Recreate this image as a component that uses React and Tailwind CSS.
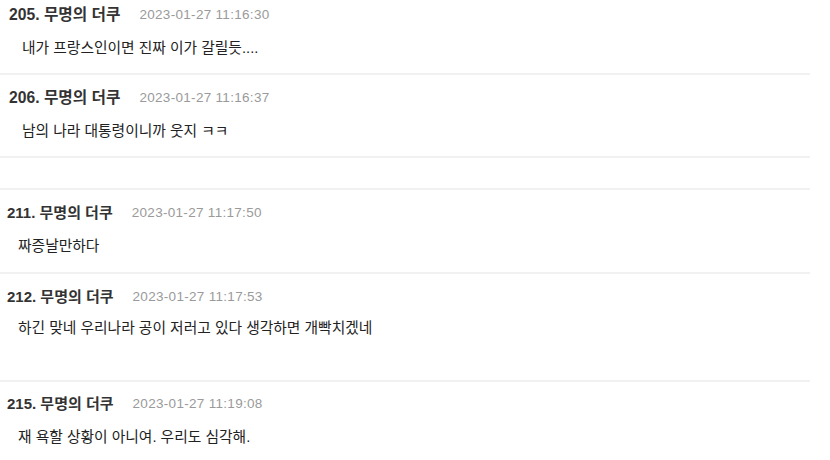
// App.jsx
import React from 'react';

const topComments = [
    { no: 205, time: '2023-01-27 11:16:30', body: '내가 프랑스인이면 진짜 이가 갈릴듯....', kind: 'first' },
    { no: 206, time: '2023-01-27 11:16:37', body: '남의 나라 대통령이니까 웃지 ㅋㅋ', kind: 'mid' },
];

const bottomComments = [
    { no: 211, time: '2023-01-27 11:17:50', body: '짜증날만하다', kind: 'mid2' },
    { no: 212, time: '2023-01-27 11:17:53', body: '하긴 맞네 우리나라 공이 저러고 있다 생각하면 개빡치겠네', kind: 'tall' },
    { no: 215, time: '2023-01-27 11:19:08', body: '재 욕할 상황이 아니여. 우리도 심각해.', kind: 'last' },
];

const wrapClass = {
    first: 'h-[75px] pt-[5px] border-b-2',
    mid: 'h-[83px] pt-[13px] border-b-2',
    mid2: 'h-[84px] pt-[13px] border-b-2',
    tall: 'h-[108px] pt-[13px] border-b-2',
    last: 'h-[78px] pt-[12px]',
};

const Comment = ({ c, compact }) => {
    return (
        <div className={`w-[810px] border-[#f1f1f1] ${wrapClass[c.kind]}`}>
            <div className={`flex items-center h-5 ${compact ? 'pl-[7px]' : 'pl-[9px]'}`}>
                <span className={`${compact ? 'text-[15px]' : 'text-[15.7px]'} font-bold text-[#333333] leading-5`}>
                    {c.no}. 무명의 더쿠
                </span>
                <span className="ml-[19px] text-[13.5px] tracking-[0.3px] text-[#9a9a9a] leading-5">
                    {c.time}
                </span>
            </div>
            <p className={`${c.kind === 'tall' ? 'mt-[11px]' : 'mt-[13px]'} text-[14.75px] leading-5 text-[#222222] ${compact ? 'pl-[18px]' : 'pl-[22px]'}`}>
                {c.body}
            </p>
        </div>
    );
};

const App = () => {
    return (
        <div
            className="w-[830px] h-[460px] overflow-hidden bg-white"
            style={{ fontFamily: '"Liberation Sans", "Noto Sans CJK KR", sans-serif' }}
        >
            {topComments.map((c) => (
                <Comment key={c.no} c={c} />
            ))}

            {/* gap between the two captured chunks */}
            <div className="w-[810px] h-[32px] border-b-2 border-[#f1f1f1]" />

            {bottomComments.map((c) => (
                <Comment key={c.no} c={c} compact />
            ))}
        </div>
    );
};

export default App;
